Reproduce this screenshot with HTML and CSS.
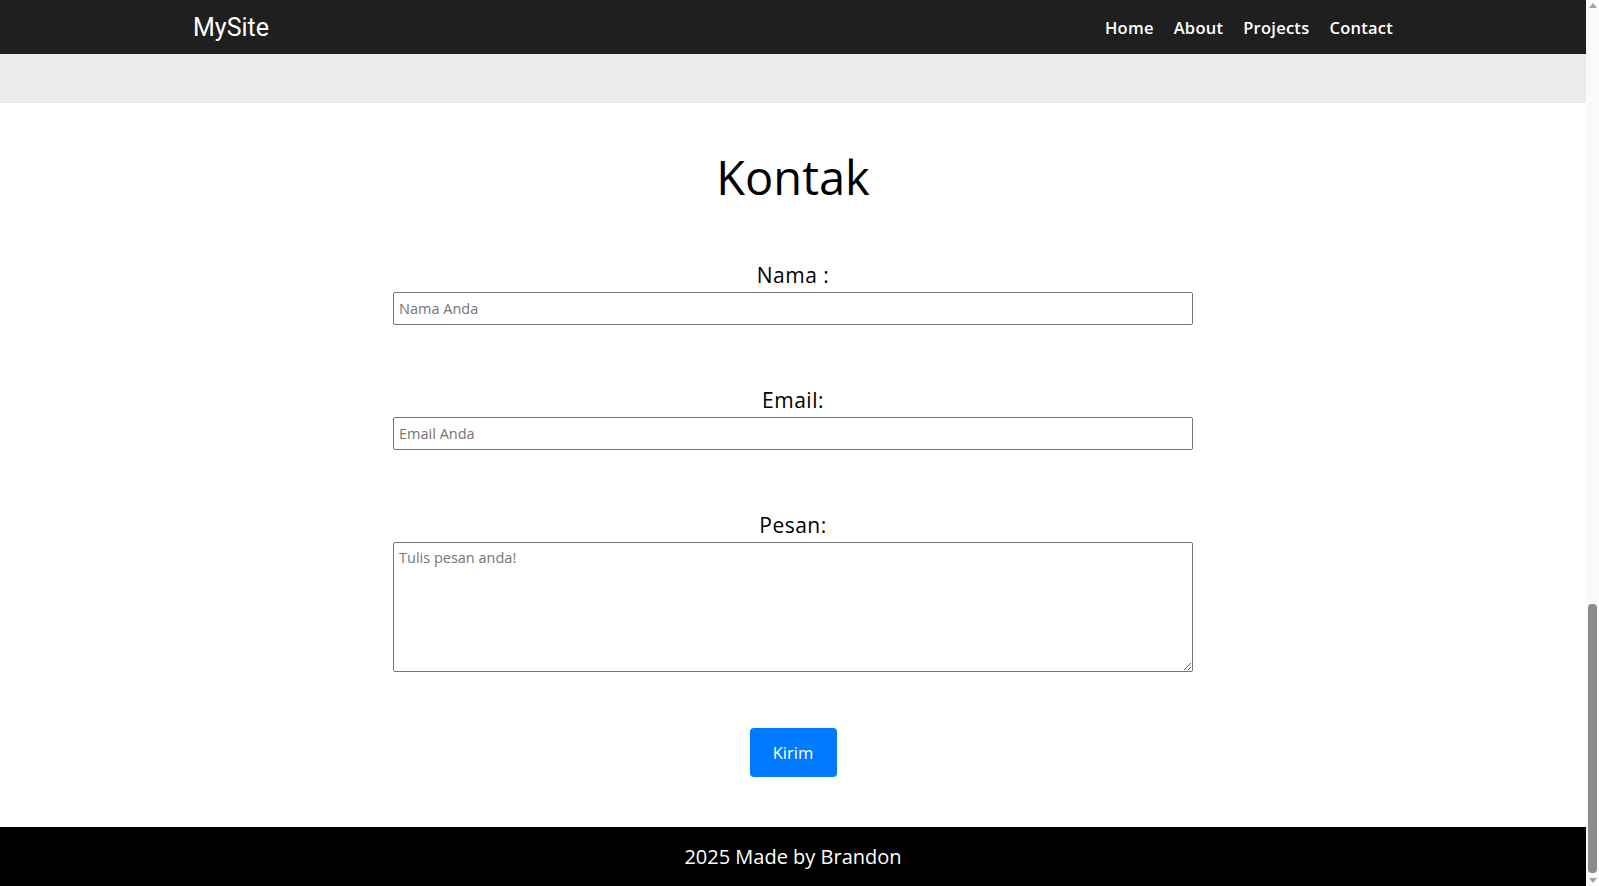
FILE: index.html
```html
<!DOCTYPE html>
<html lang="id">
<head>
<meta charset="utf-8">
<title>MySite - Kontak</title>
<link rel="stylesheet" href="styles.css">
</head>
<body>
<div class="page">
  <header class="navbar">
    <div class="container nav-inner">
      <a class="logo" href="#">MySite</a>
      <nav class="nav-links">
        <a href="#home">Home</a>
        <a href="#about">About</a>
        <a href="#projects">Projects</a>
        <a href="#contact">Contact</a>
      </nav>
    </div>
  </header>
  <section class="projects" id="projects"></section>
  <section class="contact" id="contact">
    <h1 class="contact-title">Kontak</h1>
    <form class="contact-form">
      <div class="form-group">
        <label for="nama">Nama :</label>
        <input id="nama" type="text" placeholder="Nama Anda">
      </div>
      <div class="form-group">
        <label for="email">Email:</label>
        <input id="email" type="email" placeholder="Email Anda">
      </div>
      <div class="form-group last">
        <label for="pesan">Pesan:</label>
        <textarea id="pesan" placeholder="Tulis pesan anda!"></textarea>
      </div>
      <button type="button" class="btn-submit">Kirim</button>
    </form>
  </section>
  <footer class="footer">2025 Made by Brandon</footer>
</div>
<div class="scrollbar" aria-hidden="true">
  <span class="sb-arrow up"></span>
  <div class="sb-track"><span class="sb-thumb"></span></div>
  <span class="sb-arrow down"></span>
</div>
</body>
</html>
```
FILE: styles.css
```css
* { box-sizing: border-box; }
html, body { height: 100%; overflow: hidden; }
body {
  margin: 0;
  display: flex;
  font-family: "Open Sans", "Noto Sans", sans-serif;
  color: #000;
  background: #fff;
}
.page {
  flex: 1;
  display: flex;
  flex-direction: column;
  min-width: 0;
}
.navbar {
  height: 54px;
  flex: none;
  background: #1f1f1f;
}
.container {
  max-width: 1200px;
  margin: 0 auto;
}
.nav-inner {
  height: 100%;
  display: flex;
  align-items: center;
  justify-content: space-between;
}
.logo {
  font-family: Roboto, sans-serif;
  font-size: 25px;
  color: #fff;
  text-decoration: none;
}
.nav-links {
  display: flex;
  gap: 20px;
}
.nav-links a {
  color: #fff;
  text-decoration: none;
  font-weight: 600;
  font-size: 16.5px;
  letter-spacing: 0.25px;
}
.projects {
  height: 49px;
  flex: none;
  background: #ebebeb;
}
.contact {
  flex: 1;
  padding: 43px 0 0;
  text-align: center;
}
.contact-title {
  margin: 0;
  font-size: 47px;
  font-weight: 400;
  line-height: 62px;
}
.contact-form {
  width: 800px;
  margin: 52px auto 0;
}
.form-group {
  display: flex;
  flex-direction: column;
  margin-bottom: 60px;
}
.form-group.last { margin-bottom: 56px; }
.form-group label {
  font-size: 21px;
  letter-spacing: 0.5px;
  line-height: 30px;
  margin-bottom: 2px;
}
.form-group input,
.form-group textarea {
  width: 100%;
  border: 1px solid #767676;
  border-radius: 2px;
  font-family: "Open Sans", sans-serif;
  font-size: 14.5px;
  padding: 0 5px;
  color: #000;
}
.form-group input { height: 33px; }
.form-group textarea {
  height: 130px;
  padding-top: 5px;
  resize: vertical;
}
.form-group input::placeholder,
.form-group textarea::placeholder { color: #757575; }
.btn-submit {
  width: 87px;
  height: 49px;
  border: none;
  border-radius: 4px;
  background: #007bff;
  color: #fff;
  font-family: "Open Sans", sans-serif;
  font-size: 16.5px;
  cursor: pointer;
}
.footer {
  height: 59px;
  flex: none;
  background: #000;
  color: #fff;
  font-size: 20px;
  display: flex;
  align-items: center;
  justify-content: center;
}
.scrollbar {
  width: 13px;
  flex: none;
  background: #fafafa;
  display: flex;
  flex-direction: column;
  align-items: center;
}
.sb-arrow {
  width: 0;
  height: 0;
  border-left: 4px solid transparent;
  border-right: 4px solid transparent;
  flex: none;
}
.sb-arrow.up {
  margin: 3px 0 5px;
  border-bottom: 5px solid #a3a3a3;
}
.sb-arrow.down {
  margin: 5px 0 3px;
  border-top: 5px solid #a3a3a3;
}
.sb-track {
  flex: 1;
  width: 100%;
  display: flex;
  flex-direction: column;
  justify-content: flex-end;
  align-items: center;
}
.sb-thumb {
  width: 9px;
  height: 269px;
  border-radius: 4px;
  background: #8c8c8c;
}
```
